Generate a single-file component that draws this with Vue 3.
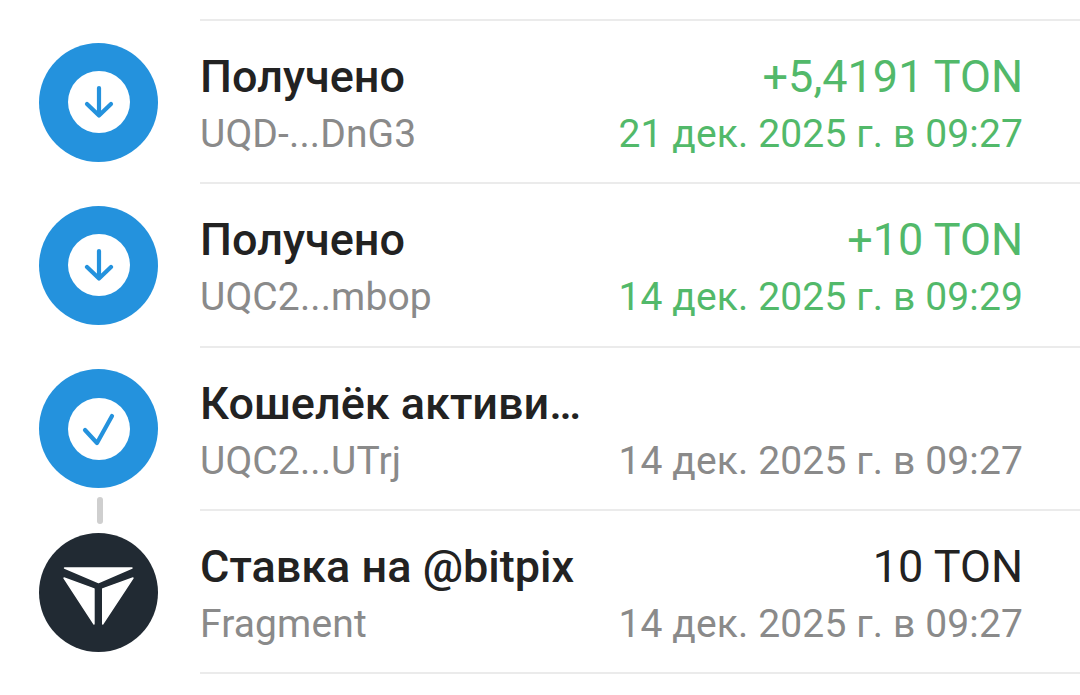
<template>
  <div class="list">
    <div v-for="(item, idx) in items" :key="idx" class="row">
      <div class="avatar" :class="item.kind">
        <svg v-if="item.kind === 'in'" class="glyph" viewBox="0 0 62 62">
          <circle cx="31" cy="31" r="31" fill="#fff" />
          <path d="M31 17V44M19 33L31 44.5L43 33" fill="none" stroke="#2492dd" stroke-width="4.2" stroke-linecap="round" stroke-linejoin="round" />
        </svg>
        <svg v-else-if="item.kind === 'ok'" class="glyph" viewBox="0 0 62 62">
          <circle cx="31" cy="31" r="31" fill="#fff" />
          <path d="M17 32L29 45L44 18" fill="none" stroke="#2492dd" stroke-width="4.2" stroke-linecap="round" stroke-linejoin="round" />
        </svg>
        <svg v-else class="glyph" viewBox="0 0 62 62">
          <g fill="#fff" stroke="#fff" stroke-width="1.4" stroke-linejoin="round">
            <path d="M-3.5 7H64L30.5 21.5Z" />
            <path d="M-4 17L26 27.8V63Z" />
            <path d="M65 17L34.7 27.8V63Z" />
          </g>
        </svg>
      </div>
      <div class="body">
        <div class="line">
          <span class="title">{{ item.title }}</span>
          <span class="amount" :class="{ green: item.green }">{{ item.amount }}</span>
        </div>
        <div class="line">
          <span class="addr">{{ item.addr }}</span>
          <span class="date" :class="{ green: item.green }">{{ item.date }}</span>
        </div>
      </div>
      <div v-if="item.linked" class="link"></div>
    </div>
  </div>
</template>

<script setup>
const items = [
  { kind: 'in', title: 'Получено', addr: 'UQD-...DnG3', amount: '+5,4191 TON', date: '21 дек. 2025 г. в 09:27', green: true },
  { kind: 'in', title: 'Получено', addr: 'UQC2...mbop', amount: '+10 TON', date: '14 дек. 2025 г. в 09:29', green: true },
  { kind: 'ok', title: 'Кошелёк активи…', addr: 'UQC2...UTrj', amount: '', date: '14 дек. 2025 г. в 09:27' },
  { kind: 'bet', title: 'Ставка на @bitpix', addr: 'Fragment', amount: '10 TON', date: '14 дек. 2025 г. в 09:27', linked: true },
];
</script>

<style>
html,
body {
  background: #fff;
  overflow: hidden;
}
</style>

<style scoped>
.list {
  width: 1080px;
  height: 695px;
  padding-top: 19px;
  box-sizing: border-box;
  background: #fff;
  font-family: Roboto, "Noto Sans", sans-serif;
  overflow: hidden;
}

.row {
  position: relative;
  display: flex;
  height: 163.3px;
  padding-left: 39px;
  box-sizing: border-box;
  align-items: center;
}

.avatar {
  flex: none;
  display: flex;
  align-items: center;
  justify-content: center;
  width: 119px;
  height: 119px;
  margin-top: 3px;
  border-radius: 50%;
  background: #2492dd;
}

.avatar.bet {
  background: #212a33;
}

.glyph {
  width: 62px;
  height: 62px;
  overflow: visible;
}

.body {
  flex: 1;
  align-self: stretch;
  min-width: 0;
  margin-left: 42px;
  padding: 32px 57px 0 0;
  border-top: 2px solid #ebebeb;
  border-bottom: 2px solid #ebebeb;
  margin-bottom: -2px;
}

.line {
  display: flex;
  justify-content: space-between;
  align-items: baseline;
}

.line + .line {
  margin-top: 12px;
}

.title {
  white-space: nowrap;
  font-size: 45px;
  line-height: 48px;
  font-weight: 500;
  color: #222;
}

.amount {
  font-size: 45px;
  line-height: 48px;
  color: #222;
}

.addr {
  font-size: 39px;
  line-height: 42px;
  letter-spacing: 0.12px;
  color: #8a8a8a;
}

.date {
  font-size: 39px;
  line-height: 42px;
  letter-spacing: 0.13px;
  color: #8a8a8a;
}

.green {
  color: #52b96a;
}

.link {
  position: absolute;
  left: 97px;
  top: -12px;
  width: 6px;
  height: 27px;
  border-radius: 3px;
  background: #cfcfcf;
}
</style>
